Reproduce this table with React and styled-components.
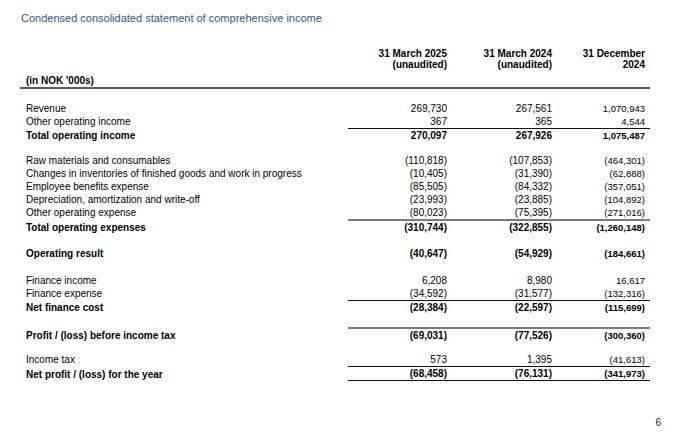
import React from "react";
import styled, { createGlobalStyle } from "styled-components";

const Global = createGlobalStyle`
  html, body { margin: 0; padding: 0; background: #ffffff; }
  body { font-family: "Liberation Sans", Arial, sans-serif; color: #000; }
`;

const Page = styled.div`
  width: 690px;
  height: 436px;
  box-sizing: border-box;
  padding: 11px 0 0 20px;
  display: flex;
  flex-direction: column;
`;

const Title = styled.h1`
  margin: 0;
  padding-left: 1px;
  font-size: 11px;
  line-height: 14px;
  font-weight: 400;
  color: #2e5597;
`;

const COLS = "328px 104px 105px 93px";

const HeaderGrid = styled.div`
  margin-top: 23px;
  width: 630px;
  display: grid;
  grid-template-columns: ${COLS};
  align-items: end;
  border-bottom: 2px solid #5a5a5a;
  font-weight: 700;
  font-size: 10px;
`;

const HeaderLabel = styled.div`
  padding-left: 6px;
  line-height: 13px;
`;

const HeaderCol = styled.div`
  text-align: right;
  padding-right: 5px;
  padding-bottom: 17px;
  line-height: 11px;
`;

const Body = styled.div`
  width: 630px;
  display: flex;
  flex-direction: column;
`;

const Spacer = styled.div`
  height: ${(p) => p.$h}px;
  flex: none;
`;

const Row = styled.div`
  display: grid;
  grid-template-columns: ${COLS};
  align-items: end;
  font-size: 10px;
  font-weight: ${(p) => (p.$bold ? 700 : 400)};
`;

const Label = styled.div`
  padding-left: 6px;
  line-height: 13px;
  white-space: nowrap;
`;

const ruleTop = {
  none: "none",
  thin: "1px solid #111",
  thick: "2px solid #7a7a7a",
};

const Num = styled.div`
  text-align: right;
  padding-right: 5px;
  line-height: 13px;
  font-size: ${(p) => (p.$small ? "9.5px" : "10px")};
  border-top: ${(p) => ruleTop[p.$top || "none"]};
  border-bottom: ${(p) => (p.$under ? "1px solid #111" : "none")};
  white-space: nowrap;
`;

const Footer = styled.div`
  margin-top: 35px;
  width: 641px;
  text-align: right;
  font-size: 10px;
  line-height: 13px;
  color: #222;
`;

const data = [
  { gap: 13 },
  { label: "Revenue", v: ["269,730", "267,561", "1,070,943"] },
  { label: "Other operating income", v: ["367", "365", "4,544"] },
  { label: "Total operating income", v: ["270,097", "267,926", "1,075,487"], bold: true, top: "thin" },
  { gap: 12 },
  { label: "Raw materials and consumables", v: ["(110,818)", "(107,853)", "(464,301)"] },
  { label: "Changes in inventories of finished goods and work in progress", v: ["(10,405)", "(31,390)", "(62,888)"] },
  { label: "Employee benefits expense", v: ["(85,505)", "(84,332)", "(357,051)"] },
  { label: "Depreciation, amortization and write-off", v: ["(23,993)", "(23,885)", "(104,892)"] },
  { label: "Other operating expense", v: ["(80,023)", "(75,395)", "(271,016)"] },
  { label: "Total operating expenses", v: ["(310,744)", "(322,855)", "(1,260,148)"], bold: true, top: "thick" },
  { gap: 13 },
  { label: "Operating result", v: ["(40,647)", "(54,929)", "(184,661)"], bold: true },
  { gap: 14 },
  { label: "Finance income", v: ["6,208", "8,980", "16,617"] },
  { label: "Finance expense", v: ["(34,592)", "(31,577)", "(132,316)"] },
  { label: "Net finance cost", v: ["(28,384)", "(22,597)", "(115,699)"], bold: true, top: "thin" },
  { gap: 13 },
  { label: "Profit / (loss) before income tax", v: ["(69,031)", "(77,526)", "(300,360)"], bold: true, top: "thick" },
  { gap: 11 },
  { label: "Income tax", v: ["573", "1,395", "(41,613)"] },
  { label: "Net profit / (loss) for the year", v: ["(68,458)", "(76,131)", "(341,973)"], bold: true, top: "thin", under: true },
];

export default function App() {
  return (
    <>
      <Global />
      <Page>
        <Title>Condensed consolidated statement of comprehensive income</Title>
        <HeaderGrid>
          <HeaderLabel>(in NOK '000s)</HeaderLabel>
          <HeaderCol>
            31 March 2025
            <br />
            (unaudited)
          </HeaderCol>
          <HeaderCol>
            31 March 2024
            <br />
            (unaudited)
          </HeaderCol>
          <HeaderCol>
            31 December
            <br />
            2024
          </HeaderCol>
        </HeaderGrid>
        <Body>
          {data.map((r, i) =>
            r.gap ? (
              <Spacer key={i} $h={r.gap} />
            ) : (
              <Row key={i} $bold={r.bold}>
                <Label>{r.label}</Label>
                {r.v.map((n, j) => (
                  <Num key={j} $small={j === 2} $top={r.top} $under={r.under}>
                    {n}
                  </Num>
                ))}
              </Row>
            )
          )}
        </Body>
        <Footer>6</Footer>
      </Page>
    </>
  );
}
